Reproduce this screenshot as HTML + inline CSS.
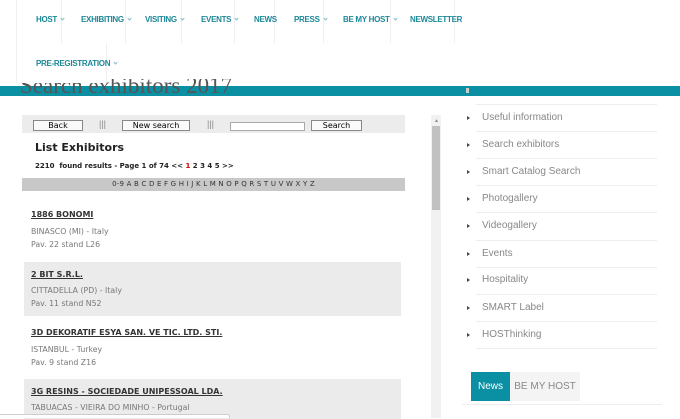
<!DOCTYPE html>
<html><head><style>
*{margin:0;padding:0;box-sizing:border-box}
body{width:680px;height:418px;overflow:hidden;background:#fff;font-family:"Liberation Sans",sans-serif;position:relative}
.hdr{position:absolute;left:0;top:0;width:680px;height:79px;background:#fff;z-index:3}
.nav{position:absolute;left:16px;top:0;width:577px;height:43px;background:#fff;z-index:4}
.nav2{position:absolute;left:16px;top:43px;width:91px;height:40px;background:#fff;z-index:4;border-right:1px solid #f0f0f0;border-left:1px solid #f0f0f0}
.it{position:absolute;top:0;height:43px;border-right:1px solid #f0f0f0;font-size:8px;font-weight:bold;color:#1c8898;line-height:40px;padding-left:19px;letter-spacing:-0.3px;white-space:nowrap}
.ch{display:inline-block;width:3px;height:3px;border-right:1px solid #8bc;border-bottom:1px solid #8bc;transform:rotate(45deg);margin-left:4px;position:relative;top:-2px}
.title{position:absolute;left:20px;top:73px;font-family:"Liberation Serif",serif;font-size:23px;color:#555;z-index:2;white-space:nowrap}
.bar{position:absolute;left:0;top:86px;width:680px;height:10px;background:#0a8fa3;z-index:1}
.tb{position:absolute;left:22px;top:115px;width:383px;height:18px;background:#ececec}
.btn{position:absolute;top:5px;height:11px;border:1px solid #888;background:#fafafa;font-family:Verdana,"DejaVu Sans",sans-serif;font-size:8px;text-align:center;line-height:9px}
.v{font-family:"DejaVu Sans",Verdana,sans-serif}
.row{position:absolute;left:24px;width:377px;height:54px}
.row b{position:absolute;left:7px;top:8px;font-size:8px;text-decoration:underline;color:#333}
.row span{position:absolute;left:7px;font-size:7.8px;color:#777}
.side{position:absolute;left:467px;font-size:10px;color:#888;font-family:"Liberation Sans",sans-serif}
.side i{position:absolute;left:0;top:3px;border-left:3px solid #444;border-top:2.5px solid transparent;border-bottom:2.5px solid transparent}
.side em{font-style:normal;position:absolute;left:15px;top:-1px;white-space:nowrap}
.ln{position:absolute;left:476px;width:181px;height:1px;background:#eee}
</style></head><body>
<div class="hdr"></div>
<div class="nav">
<div class="it" style="left:0;width:46px;border-left:1px solid #f0f0f0">HOST<span class="ch"></span></div>
<div class="it" style="left:46px;width:64px">EXHIBITING<span class="ch"></span></div>
<div class="it" style="left:110px;width:56px">VISITING<span class="ch"></span></div>
<div class="it" style="left:166px;width:53px">EVENTS<span class="ch"></span></div>
<div class="it" style="left:219px;width:40px">NEWS</div>
<div class="it" style="left:259px;width:49px">PRESS<span class="ch"></span></div>
<div class="it" style="left:308px;width:67px">BE MY HOST<span class="ch"></span></div>
<div class="it" style="left:375px;width:64px">NEWSLETTER</div>
</div>
<div class="nav2"><div class="it" style="left:0;width:110px;border:none;line-height:42px">PRE-REGISTRATION<span class="ch"></span></div></div>
<div class="title">Search exhibitors 2017</div>
<div class="bar"></div>
<div style="position:absolute;left:466px;top:88px;width:3px;height:5px;background:#ccc;z-index:3"></div>
<div class="ln" style="top:104px"></div>

<div class="tb">
<div class="btn" style="left:11px;width:50px">Back</div>
<div style="position:absolute;left:77px;top:4px;font-size:9px;color:#888">|||</div>
<div class="btn" style="left:100px;width:68px">New search</div>
<div style="position:absolute;left:185px;top:4px;font-size:9px;color:#888">|||</div>
<div style="position:absolute;left:208px;top:7px;width:75px;height:9px;border:1px solid #aaa;background:#fff"></div>
<div class="btn" style="left:289px;width:51px">Search</div>
</div>
<div class="v" style="position:absolute;left:35px;top:141px;font-size:11px;font-weight:bold;color:#222">List Exhibitors</div>
<div class="v" style="position:absolute;left:35px;top:162px;font-size:7px;font-weight:bold;color:#222">2210 &nbsp;found results - Page 1 of 74 &lt;&lt; <span style="color:#c00">1</span> 2 3 4 5 &gt;&gt;</div>
<div class="v" style="position:absolute;left:22px;top:178px;width:383px;height:13px;background:#c8c8c8;font-size:7px;text-align:center;line-height:13px;color:#333;letter-spacing:0.2px">0-9 A B C D E F G H I J K L M N O P Q R S T U V W X Y Z</div>

<div class="row v" style="top:202px"><b>1886 BONOMI</b><span style="top:25px">BINASCO (MI) - Italy</span><span style="top:38px">Pav. 22 stand L26</span></div>
<div class="row v" style="top:262px;background:#ebebeb"><b>2 BIT S.R.L.</b><span style="top:24px">CITTADELLA (PD) - Italy</span><span style="top:37px">Pav. 11 stand N52</span></div>
<div class="row v" style="top:320px"><b>3D DEKORATIF ESYA SAN. VE TIC. LTD. STI.</b><span style="top:25px">ISTANBUL - Turkey</span><span style="top:38px">Pav. 9 stand Z16</span></div>
<div class="row v" style="top:379px;background:#ebebeb;height:40px"><b>3G RESINS - SOCIEDADE UNIPESSOAL LDA.</b><span style="top:24px">TABUACAS - VIEIRA DO MINHO - Portugal</span></div>
<div style="position:absolute;left:0;top:414px;width:230px;height:4px;border-top:1px solid #ccc;border-right:1px solid #ccc;border-radius:0 3px 0 0;background:#fff"></div>

<div style="position:absolute;left:431px;top:115px;width:10px;height:303px;background:#f1f1f1"></div>
<div style="position:absolute;left:432px;top:126px;width:8px;height:84px;background:#c1c1c1"></div>
<div style="position:absolute;left:434px;top:118px;font-size:5px;color:#888">▲</div>

<div class="side" style="top:113px"><i></i><em>Useful information</em></div><div class="ln" style="top:131px"></div>
<div class="side" style="top:140px"><i></i><em>Search exhibitors</em></div><div class="ln" style="top:158px"></div>
<div class="side" style="top:167px"><i></i><em>Smart Catalog Search</em></div><div class="ln" style="top:185px"></div>
<div class="side" style="top:194px"><i></i><em>Photogallery</em></div><div class="ln" style="top:212px"></div>
<div class="side" style="top:221px"><i></i><em>Videogallery</em></div><div class="ln" style="top:240px"></div>
<div class="side" style="top:249px"><i></i><em>Events</em></div><div class="ln" style="top:267px"></div>
<div class="side" style="top:275px"><i></i><em>Hospitality</em></div><div class="ln" style="top:294px"></div>
<div class="side" style="top:303px"><i></i><em>SMART Label</em></div><div class="ln" style="top:321px"></div>
<div class="side" style="top:330px"><i></i><em>HOSThinking</em></div><div class="ln" style="top:348px"></div>

<div style="position:absolute;left:471px;top:372px;width:39px;height:29px;background:#0a8fa3;color:#fff;font-size:10px;text-align:center;line-height:29px">News</div>
<div style="position:absolute;left:510px;top:372px;width:70px;height:29px;background:#f4f4f4;color:#888;font-size:10px;text-align:center;line-height:29px">BE MY HOST</div>
<div class="ln" style="top:404px;left:462px;width:200px"></div>
</body></html>
